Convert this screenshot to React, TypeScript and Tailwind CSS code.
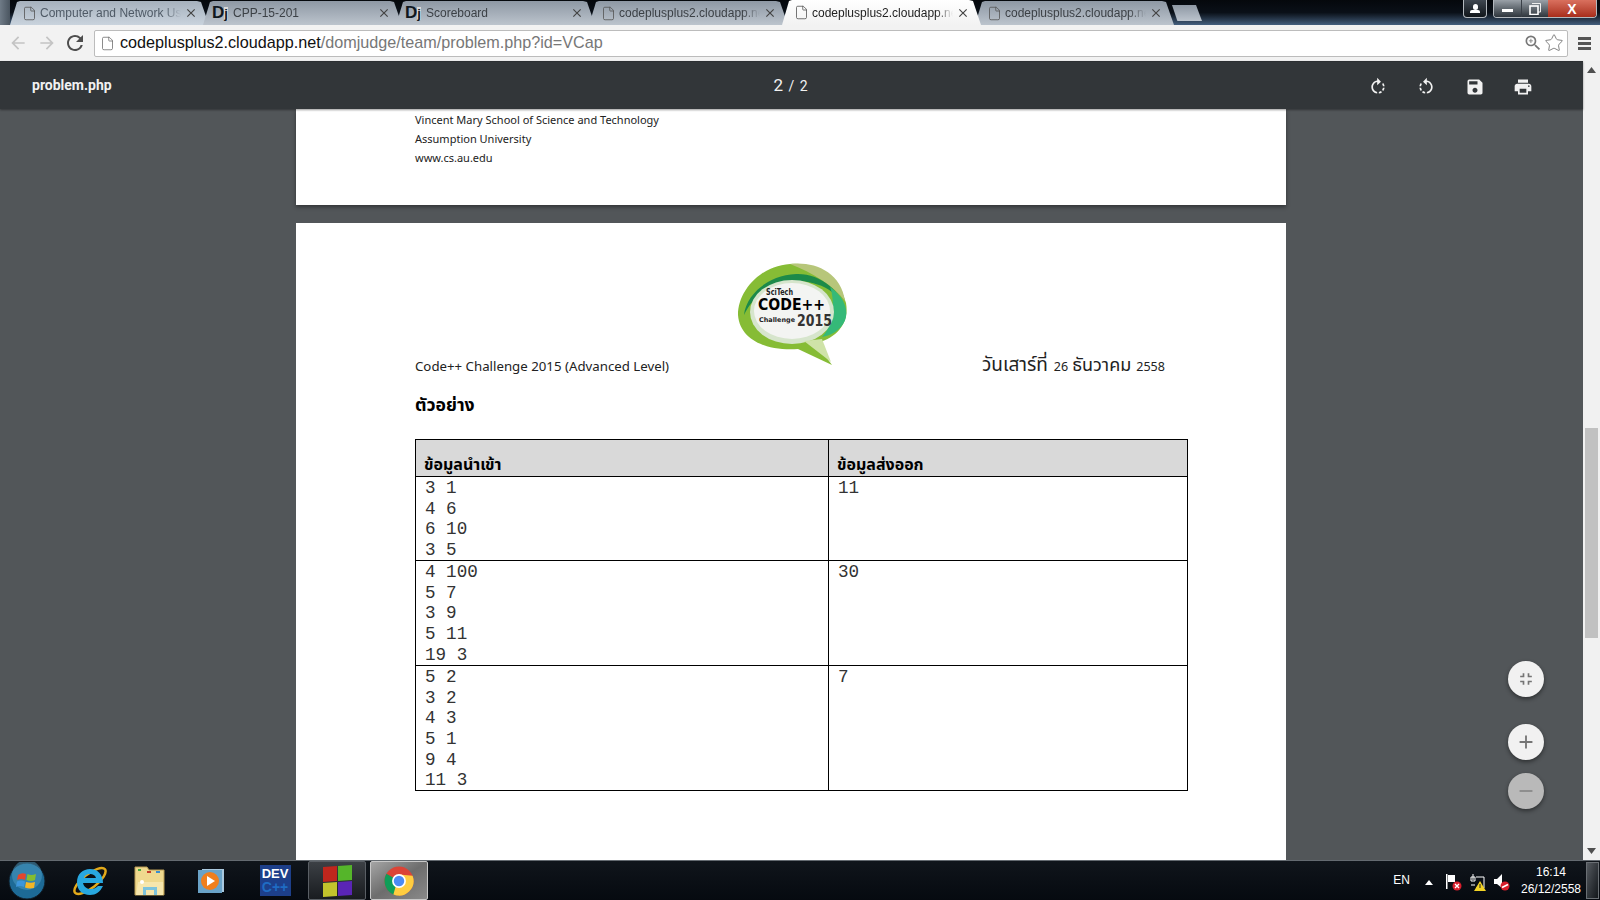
import React from "react";
import { MdRotateRight, MdRotateLeft, MdSave, MdPrint, MdFullscreenExit, MdAdd, MdRemove, MdArrowBack, MdArrowForward, MdRefresh, MdZoomIn, MdClose } from "react-icons/md";
import { File, Star } from "lucide-react";

const thai = "font-['Noto_Sans_Thai','Noto_Sans','Open_Sans','Liberation_Sans',sans-serif]";

function DjIcon() {
  return (
    <span className="shrink-0 -ml-[3px] w-[18px] h-[18px] flex items-baseline font-['Liberation_Sans',sans-serif] font-bold text-[#10181f] leading-none">
      <span className="text-[17px]">D</span>
      <span className="text-[13px] bg-[#d9d9d9]">j</span>
    </span>
  );
}

function Tab({ title, dj, active, light }: { title: string; dj?: boolean; active?: boolean; light?: boolean }) {
  const bg = active
    ? "bg-gradient-to-b from-[#ffffff] to-[#f2f2f2] text-[#222] relative z-10 h-[25px]"
    : light
      ? "bg-gradient-to-b from-[#a6b1bd] to-[#c9d3dd] text-[#4f5a66] h-[24px]"
      : "bg-gradient-to-b from-[#8e98a4] to-[#bcc4cd] text-[#3c4146] h-[24px]";
  return (
    <div className={`w-[199px] -mr-[6px] shrink-0 flex items-center pl-[12px] pr-[11px] gap-[3px] [clip-path:polygon(0_100%,7px_4%,10px_0,calc(100%-12px)_0,calc(100%-8px)_4%,100%_100%)] ${bg}`}>
      {dj ? <DjIcon /> : <File size={15} strokeWidth={1.3} className="text-[#555] shrink-0" />}
      <span className="flex-1 min-w-0 overflow-hidden whitespace-nowrap text-[12px] font-['Liberation_Sans',sans-serif] [mask-image:linear-gradient(to_right,black_88%,transparent)]">{title}</span>
      <MdClose size={14} className="shrink-0 text-[#444]" />
    </div>
  );
}

function WindowButtons() {
  return (
    <div className="flex items-start gap-[6px] h-[18px] ml-auto mr-[3px]">
      <div className="w-[24px] h-[18px] rounded-b-[4px] border border-t-0 border-[#b4b9be] bg-gradient-to-b from-[#3f4750] to-[#11161b] flex flex-col items-center justify-center">
        <div className="w-[5px] h-[6px] rounded-full bg-white" />
        <div className="w-[10px] h-[3px] bg-white rounded-t-[2px]" />
      </div>
      <div className="flex h-[18px] w-[104px] rounded-b-[4px] border border-t-0 border-[#b4b9be] overflow-hidden">
        <div className="w-[27px] bg-gradient-to-b from-[#9aa1a8] to-[#2f363d] flex items-center justify-center">
          <div className="w-[11px] h-[3px] mt-[4px] bg-white" />
        </div>
        <div className="w-[27px] bg-gradient-to-b from-[#9aa1a8] to-[#2f363d] flex items-center justify-center border-l border-[#3a4048]">
          <svg width="12" height="12" viewBox="0 0 12 12">
            <path d="M3 0.5 H11.5 V9 H9" fill="none" stroke="#eee" />
            <rect x="1" y="3" width="8" height="8.5" fill="none" stroke="#fff" strokeWidth="1.6" />
          </svg>
        </div>
        <div className="flex-1 bg-gradient-to-b from-[#d9705e] to-[#a82c1a] flex items-center justify-center text-white font-bold text-[14px] font-['Liberation_Sans',sans-serif] leading-none">
          X
        </div>
      </div>
    </div>
  );
}

function Chrome() {
  return (
    <svg width="30" height="30" viewBox="0 0 32 32">
      <circle cx="16" cy="16" r="15.5" fill="#db4437" />
      <path d="M16 16 L2.6 8.3 A15.5 15.5 0 0 0 10 30.3 L16 31.5 Z" fill="#0f9d58" />
      <path d="M16 9 L30.5 10.5 A15.5 15.5 0 0 1 10 30.3 Z" fill="#ffcd40" />
      <circle cx="16" cy="16" r="7.4" fill="#fff" />
      <circle cx="16" cy="16" r="5.6" fill="#4c8bf5" />
    </svg>
  );
}

function Logo() {
  return (
    <svg width="110" height="103" viewBox="0 0 110 103">
      <defs>
        <filter id="soft"><feGaussianBlur stdDeviation="0.5" /></filter>
      </defs>
      <g filter="url(#soft)">
        <path d="M0 52 C0 28 22 3 52 1 C75 -1 100 10 108 40 C112 62 96 76 78 80 L94 102 L60 86 C30 88 2 78 0 52 Z" fill="#86bc35" />
        <path d="M52 1 C75 -2 103 8 107 38 C95 22 75 10 52 1 Z" fill="#b7c67a" />
        <path d="M6 52 C8 32 30 12 58 11 C82 10 104 28 108 50 C104 30 82 18 58 18 C34 18 14 34 6 52 Z" fill="#1c8a4a" />
        <path d="M92 24 C104 32 110 44 108 54 C106 64 96 72 84 74 C94 64 98 40 92 24 Z" fill="#35b978" />
        <ellipse cx="54" cy="49" rx="42" ry="32" fill="#d6e5cc" />
        <ellipse cx="54" cy="48" rx="38" ry="28" fill="#f3f4f2" />
        <path d="M66 78 L84 76 L93 99 Z" fill="#cfe3a8" />
      </g>
      <text x="28" y="32" fontFamily="'DejaVu Sans',sans-serif" fontWeight="700" fontSize="8" fill="#222" textLength="27" lengthAdjust="spacingAndGlyphs">SciTech</text>
      <text x="20" y="47" fontFamily="'DejaVu Sans',sans-serif" fontWeight="700" fontSize="16" fill="#000" textLength="67" lengthAdjust="spacingAndGlyphs">CODE++</text>
      <text x="21" y="59" fontFamily="'DejaVu Sans',sans-serif" fontWeight="700" fontSize="6.5" fill="#222" textLength="36" lengthAdjust="spacingAndGlyphs">Challenge</text>
      <text x="59" y="63" fontFamily="'DejaVu Sans',sans-serif" fontWeight="700" fontSize="15.5" fill="#333" textLength="35" lengthAdjust="spacingAndGlyphs">2015</text>
    </svg>
  );
}

function Cell({ lines }: { lines: string[] }) {
  return (
    <td className="border border-black align-top pl-[9px]">
      {lines.map((l, i) => (
        <div key={i} className="h-[20.7px] pt-[1px] leading-[20.7px] whitespace-pre font-['Liberation_Mono',monospace] text-[17.6px] text-[#333]">{l}</div>
      ))}
    </td>
  );
}

function Taskbar() {
  return (
    <div className="h-[40px] shrink-0 flex items-stretch border-t border-[#646a70] bg-gradient-to-b from-[#10151b] to-[#060a10] relative z-20">
      <div className="w-[54px] flex items-center justify-center">
        <svg width="38" height="38" viewBox="0 0 38 38">
          <circle cx="19" cy="19" r="18" fill="#1d6a96" stroke="#101c26" />
          <circle cx="19" cy="13" r="15" fill="#4f9ec6" opacity=".5" />
          <path d="M10 13 Q14 10 18 12 L17 18 Q13 16 9 18 Z" fill="#e2462c" />
          <path d="M19.5 12 Q23 14 28 12 L27 18 Q23 20 18.5 18 Z" fill="#85bd2f" />
          <path d="M9 19.5 Q13 17.5 17 19.5 L16 25 Q12 23 8 25 Z" fill="#3d96dc" />
          <path d="M18 20 Q23 21.5 27 20 L26 26 Q21 27 17 25.5 Z" fill="#f5b626" />
        </svg>
      </div>
      <div className="w-[72px] flex items-center justify-center">
        <svg width="34" height="36" viewBox="0 0 34 36">
          <ellipse cx="17" cy="18" rx="19" ry="7" transform="rotate(-38 17 18)" fill="none" stroke="#e2a91a" strokeWidth="2.5" />
          <path d="M17 6 C25 6 30 12 30 20 L10 20 C11 24 14 26 18 26 C21 26 23 25 25 23 L30 23 C27 29 23 32 17 32 C9 32 4 27 4 19 C4 11 10 6 17 6 Z M11 15 L23 15 C22 12 20 11 17 11 C14 11 12 12 11 15 Z" fill="#28a8e0" fillRule="evenodd" />
        </svg>
      </div>
      <div className="w-[48px] flex items-center justify-center">
        <svg width="34" height="32" viewBox="0 0 34 32">
          <path d="M2 2 H14 L16 5 H31 V30 H2 Z" fill="#efd98e" stroke="#b79b54" />
          <rect x="5" y="4" width="3" height="2" fill="#49a942" />
          <rect x="14" y="6" width="4" height="2" fill="#c63b2b" />
          <rect x="23" y="6" width="4" height="2" fill="#3a8fd0" />
          <path d="M5 17 H30 V30 H3 Z" fill="#f6e6ad" />
          <path d="M10 22 H24 V30 H21 V25 H13 V30 H10 Z" fill="#7cc3dd" />
          <circle cx="9" cy="17" r="2" fill="#fff" />
        </svg>
      </div>
      <div className="w-[74px] flex items-center justify-center">
        <svg width="28" height="26" viewBox="0 0 28 26">
          <rect x="5" y="1" width="22" height="23" fill="#a9c8de" />
          <rect x="1" y="2" width="24" height="23" fill="#6aa3c8" />
          <circle cx="13" cy="13" r="9" fill="#f07f1d" />
          <path d="M10 8 L18 13 L10 18 Z" fill="#fff" />
        </svg>
      </div>
      <div className="w-[54px] flex items-center justify-center">
        <div className="w-[31px] h-[31px] bg-[#1d3f8a] flex flex-col items-center justify-center leading-none font-['Liberation_Sans',sans-serif] font-bold">
          <span className="text-[13px] text-white">DEV</span>
          <span className="text-[14px] text-[#1f6cc4]">C++</span>
        </div>
      </div>
      <div className="w-[6px]" />
      <div className="w-[58px] rounded-[2px] border border-[#5a5f65] bg-gradient-to-b from-[#3c4045] to-[#191c20] flex items-center justify-center">
        <div className="grid grid-cols-2 gap-[1px] w-[29px] h-[30px] [transform:skewY(-4deg)]">
          <div className="bg-[#c0261d]" />
          <div className="bg-[#55b52a]" />
          <div className="bg-[#c3c32c]" />
          <div className="bg-[#5a25b5]" />
        </div>
      </div>
      <div className="w-[4px]" />
      <div className="w-[58px] rounded-[2px] border border-[#c8c8c8] bg-gradient-to-br from-[#a5a5a5] via-[#6d6d6d] to-[#8a8a8a] flex items-center justify-center">
        <Chrome />
      </div>
      <div className="flex-1" />
      <div className="flex items-center pt-[4px]">
        <span className="text-[12px] -mt-[6px] text-white font-['Liberation_Sans',sans-serif]">EN</span>
        <svg width="8" height="5" viewBox="0 0 8 5" className="ml-[15px]"><path d="M4 0 L8 5 H0 Z" fill="#fff" /></svg>
        <svg width="16" height="17" viewBox="0 0 16 17" className="ml-[13px]">
          <rect x="0" y="0" width="1.5" height="15" fill="#fff" />
          <path d="M2 1 H9 V8 H2 Z" fill="#fff" />
          <circle cx="11" cy="12" r="4.5" fill="#d81e2c" />
          <path d="M9 10 L13 14 M13 10 L9 14" stroke="#fff" strokeWidth="1.3" />
        </svg>
        <svg width="16" height="17" viewBox="0 0 16 17" className="ml-[8px]">
          <path d="M3 0 V6 M1 3 H5 V7 H1 Z M6 3 H14 V14 H6 M1 11 H5" fill="none" stroke="#fff" />
          <path d="M10 7 L16 17 H4 Z" fill="#f3d325" />
          <rect x="9.5" y="10" width="1" height="4" fill="#222" />
        </svg>
        <svg width="16" height="17" viewBox="0 0 16 17" className="ml-[8px] mr-[8px]">
          <path d="M0 5 H3 L8 0 V14 L3 10 H0 Z" fill="#fff" />
          <circle cx="11" cy="12" r="4.5" fill="#d81e2c" />
          <path d="M8 13.5 L14 10.5" stroke="#fff" strokeWidth="1.6" />
        </svg>
      </div>
      <div className="w-[66px] flex flex-col items-center justify-center text-[12px] leading-[17px] text-white font-['Liberation_Sans',sans-serif]">
        <span>16:14</span>
        <span>26/12/2558</span>
      </div>
      <div className="w-[13px] ml-[2px] my-[1px] border border-[#6a6f74] bg-gradient-to-br from-[#555a60] to-[#14181c] mr-[1px]" />
    </div>
  );
}

export default function App() {
  return (
    <div className="w-[1600px] h-[900px] flex flex-col overflow-hidden bg-[#525659]">
      {/* tab strip */}
      <div className="h-[25px] shrink-0 flex items-end bg-gradient-to-b from-[#05080c] via-[#0a1018] to-[#44607f]">
        <div className="w-[10px] h-full shrink-0 bg-gradient-to-r from-[#6f7b87] to-[#4a5560]" />
        <Tab title="Computer and Network Us" light />
        <Tab title="CPP-15-201" dj />
        <Tab title="Scoreboard" dj />
        <Tab title="codeplusplus2.cloudapp.ne" />
        <Tab title="codeplusplus2.cloudapp.ne" active />
        <Tab title="codeplusplus2.cloudapp.ne" />
        <div className="w-[30px] h-[16px] mb-[4px] ml-[4px] bg-gradient-to-b from-[#8e98a4] to-[#bcc4cd] [clip-path:polygon(0_0,80%_0,100%_100%,18%_100%)]" />
        <div className="flex-1 self-start flex">
          <WindowButtons />
        </div>
      </div>
      {/* toolbar */}
      <div className="h-[36px] shrink-0 flex items-center bg-[#f2f2f2]">
        <div className="w-[94px] flex items-center pl-[8px] gap-[5px]">
          <MdArrowBack size={20} className="text-[#c4c4c4]" />
          <MdArrowForward size={20} className="ml-[4px] text-[#c4c4c4]" />
          <MdRefresh size={24} className="ml-[1px] text-[#4e4e4e]" />
        </div>
        <div className="w-[1474px] h-[27px] flex items-center bg-white border border-[#bcbcbc] rounded-[2px] pl-[5px] pr-[3px]">
          <File size={15} strokeWidth={1.2} className="text-[#666] shrink-0" />
          <span className="ml-[5px] -mt-[2px] text-[16.2px] whitespace-nowrap font-['Liberation_Sans',sans-serif] text-[#111]">
            codeplusplus2.cloudapp.net<span className="text-[#777]">/domjudge/team/problem.php?id=VCap</span>
          </span>
          <div className="ml-auto flex items-center gap-[1px]">
            <MdZoomIn size={20} className="text-[#777]" />
            <Star size={20} strokeWidth={1.1} className="text-[#777]" />
          </div>
        </div>
        <div className="flex-1 flex justify-center">
          <div className="w-[13px] flex flex-col gap-[2px]">
            <div className="h-[3px] bg-[#555]" />
            <div className="h-[3px] bg-[#555]" />
            <div className="h-[3px] bg-[#555]" />
          </div>
        </div>
      </div>
      {/* content */}
      <div className="flex-1 flex min-h-0 relative">
        <div className="flex-1 min-w-0 flex flex-col">
          <div className="h-[48px] shrink-0 flex items-center bg-[#323639] text-white relative z-10 shadow-[0_1px_2px_rgba(0,0,0,.4)] border-t border-[#2c2f32] font-['Roboto','Liberation_Sans',sans-serif]">
            <span className="flex-1 pl-[32px] font-bold text-[14px] text-[#f1f1f1]">problem.php</span>
            <span className="ml-[16px] text-[#f1f1f1] text-[14px]"><span className="text-[17px]">2</span> <span className="mx-[2px]">/</span> 2</span>
            <div className="flex-1 flex justify-end gap-[28.3px] pr-[50px] pt-[3px]">
              <MdRotateRight size={20} className="text-[#f1f1f1]" />
              <MdRotateLeft size={20} className="text-[#f1f1f1]" />
              <MdSave size={20} className="text-[#f1f1f1]" />
              <MdPrint size={20} className="text-[#f1f1f1]" />
            </div>
          </div>
          <div className={`flex-1 min-h-0 overflow-hidden bg-[#525659] flex flex-col items-start pl-[296px] ${thai}`}>
            <div className="w-[990px] h-[96px] shrink-0 bg-white shadow-[0_2px_4px_rgba(0,0,0,.4)] pl-[119px] pt-[2px] text-[11px] leading-[19.2px] text-[#222]">
              <div>Vincent Mary School of Science and Technology</div>
              <div>Assumption University</div>
              <div>www.cs.au.edu</div>
            </div>
            <div className="w-[990px] mt-[18px] flex-1 min-h-0 bg-white pl-[119px] pt-[40px] text-[#222] overflow-hidden">
              <div className="ml-[323px]"><Logo /></div>
              <div className="flex items-baseline -mt-[14px] h-[26px] text-[13.25px]">
                <span className="w-[567px]">Code++ Challenge 2015 (Advanced Level)</span>
                <span className="text-[19px]">วันเสาร์ที่</span>
                <span className="text-[12.5px] ml-[6px]">26</span>
                <span className="text-[18px] ml-[4px]">ธันวาคม</span>
                <span className="text-[12.5px] ml-[5px]">2558</span>
              </div>
              <div className="mt-[14px] h-[33px] text-[17.6px] font-bold leading-[27px] text-black">ตัวอย่าง</div>
              <table className="mt-[14px] w-[773px] table-fixed border-collapse">
                <tbody>
                  <tr className="h-[37px] bg-[#d9d9d9]">
                    <td className="w-[413px] border border-black px-[8px] align-bottom text-[16px] font-bold leading-[22px] text-black">ข้อมูลนำเข้า</td>
                    <td className="border border-black px-[8px] align-bottom text-[16px] font-bold leading-[22px] text-black">ข้อมูลส่งออก</td>
                  </tr>
                  <tr className="h-[84px]">
                    <Cell lines={["3 1", "4 6", "6 10", "3 5"]} />
                    <Cell lines={["11"]} />
                  </tr>
                  <tr className="h-[105px]">
                    <Cell lines={["4 100", "5 7", "3 9", "5 11", "19 3"]} />
                    <Cell lines={["30"]} />
                  </tr>
                  <tr className="h-[125px]">
                    <Cell lines={["5 2", "3 2", "4 3", "5 1", "9 4", "11 3"]} />
                    <Cell lines={["7"]} />
                  </tr>
                </tbody>
              </table>
            </div>
          </div>
        </div>
        {/* scrollbar */}
        <div className="w-[17px] shrink-0 bg-[#f1f1f1] flex flex-col items-center relative">
          <svg width="9" height="6" viewBox="0 0 9 6" className="mt-[6px]"><path d="M4.5 0 L9 6 H0 Z" fill="#505050" /></svg>
          <div className="mt-[355px] w-[13px] h-[210px] bg-[#c1c1c1]" />
          <svg width="9" height="6" viewBox="0 0 9 6" className="mt-auto mb-[6px]"><path d="M0 0 H9 L4.5 6 Z" fill="#505050" /></svg>
        </div>
        {/* floating buttons */}
        <div className="absolute left-[1508px] top-[600px] w-[36px] flex flex-col">
          <button className="w-[36px] h-[36px] rounded-full bg-[#f1f1f1] shadow-[0_2px_4px_rgba(0,0,0,.45)] flex items-center justify-center">
            <MdFullscreenExit size={20} className="text-[#757575]" />
          </button>
          <button className="mt-[27px] w-[36px] h-[36px] rounded-full bg-[#f1f1f1] shadow-[0_2px_4px_rgba(0,0,0,.45)] flex items-center justify-center">
            <MdAdd size={22} className="text-[#757575]" />
          </button>
          <button className="mt-[13px] w-[36px] h-[36px] rounded-full bg-[#b9b9b9] shadow-[0_2px_4px_rgba(0,0,0,.45)] flex items-center justify-center">
            <MdRemove size={22} className="text-[#8a8a8a]" />
          </button>
        </div>
      </div>
      <Taskbar />
    </div>
  );
}
